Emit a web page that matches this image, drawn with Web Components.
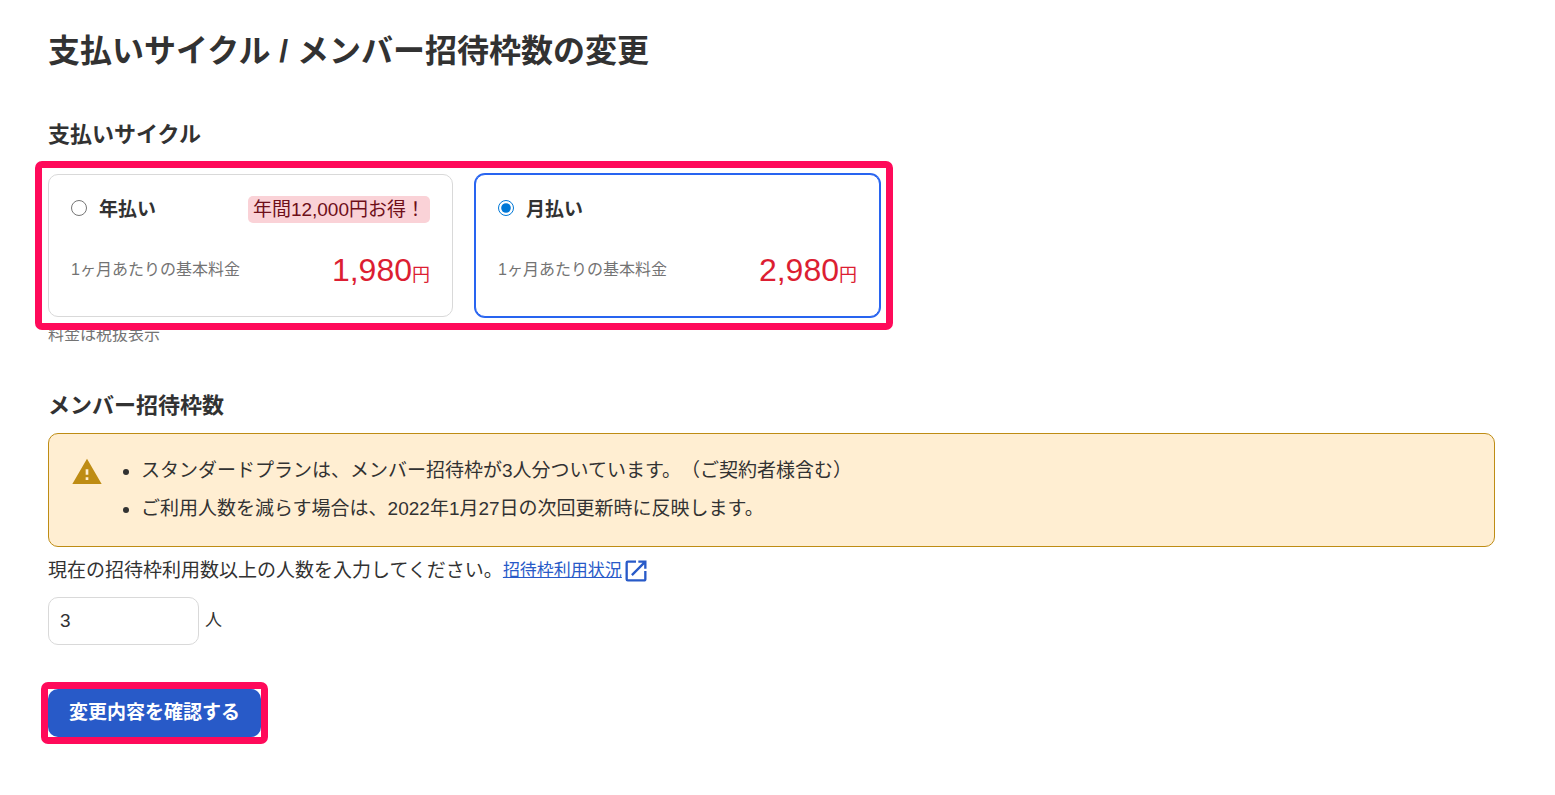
<!DOCTYPE html>
<html lang="ja">
<head>
<meta charset="utf-8">
<meta name="viewport" content="width=device-width, initial-scale=1">
<title>支払いサイクル / メンバー招待枠数の変更</title>
<style>
    body{
        margin: 0;
        background-color: #fff;
        color: #323232;
        font-family: "Liberation Sans", "Noto Sans CJK JP", sans-serif;
        font-size: 19px;
        line-height: 32px;
        text-spacing-trim: space-all;
        --danger: #dc1e32;
        --primary: #285ac8;
        --line: #d9d9d9;
        --muted: #737373;
    }
</style>
</head>
<body>
<plan-change></plan-change>

<template id="form-section">
    <style>
        :host{
            display: block;
        }
        h2{
            margin: 0 0 11px;
            font-size: 22px;
            line-height: 32px;
        }
    </style>
    <section>
        <h2></h2>
        <slot></slot>
    </section>
</template>

<template id="highlight-frame">
    <style>
        :host{
            display: block;
            position: relative;
            --space: 0px;
        }
        :host([wide]){
            --space: 6px;
        }
        .frame{
            position: absolute;
            inset: calc(-7px - var(--space));
            border: 7px solid #ff0a5a;
            border-radius: 7px;
            pointer-events: none;
        }
    </style>
    <slot></slot>
    <div class="frame"></div>
</template>

<template id="plan-card">
    <style>
        :host{
            display: block;
            padding: 21px 22px 22px;
            border: 1px solid var(--line);
            border-radius: 10px;
            background-color: #fff;
        }
        :host([selected]){
            border-color: #2864f0;
            box-shadow: 0 0 0 1px #2864f0;
        }
        .row{
            display: flex;
            align-items: center;
            justify-content: space-between;
        }
        .head{
            min-height: 27px;
            margin-bottom: 23px;
            line-height: 27px;
        }
        .choice{
            display: flex;
            align-items: center;
            gap: 12px;
            font-weight: bold;
        }
        .badge{
            padding: 0 5px;
            border-radius: 5px;
            background-color: #fad2d7;
            color: #6e0f19;
        }
        .caption{
            color: var(--muted);
            font-size: 16px;
            line-height: 24px;
        }
        .price{
            display: flex;
            align-items: baseline;
            color: var(--danger);
            font-size: 18px;
            line-height: 24px;
        }
        .amount{
            font-size: 32px;
            line-height: 48px;
        }
        [hidden]{
            display: none;
        }
    </style>
    <div class="row head">
        <span class="choice"><slot></slot></span>
        <span class="badge" hidden></span>
    </div>
    <div class="row">
        <span class="caption">1ヶ月あたりの基本料金</span>
        <span class="price"><span class="amount"></span>円</span>
    </div>
</template>

<template id="notice-box">
    <style>
        :host{
            display: flex;
            padding: 18px 22px;
            border: 1px solid #be8c14;
            border-radius: 10px;
            background-color: #ffeed2;
        }
        svg{
            flex: none;
            width: 32px;
            height: 32px;
            margin-top: 4px;
            fill: #be8c14;
        }
    </style>
    <svg viewBox="0 0 24 24" aria-hidden="true"><path d="M1 21h22L12 2 1 21zm12-3h-2v-2h2v2zm0-4h-2v-4h2v4z"/></svg>
    <slot></slot>
</template>

<template id="external-link">
    <style>
        :host{
            display: inline-flex;
        }
        a{
            display: inline-flex;
            align-items: center;
            color: var(--primary);
            font-size: 17px;
            text-decoration: none;
        }
        span{
            text-decoration: underline;
        }
        svg{
            width: 28px;
            height: 28px;
            fill: currentColor;
        }
    </style>
    <a target="_blank" rel="noopener">
        <span><slot></slot></span>
        <svg viewBox="0 0 24 24" aria-hidden="true"><path d="M19 19H5V5h7V3H5a2 2 0 0 0-2 2v14a2 2 0 0 0 2 2h14c1.1 0 2-.9 2-2v-7h-2v7zM14 3v2h3.59l-9.83 9.83 1.41 1.41L19 6.41V10h2V3h-7z"/></svg>
    </a>
</template>

<template id="primary-button">
    <style>
        :host{
            display: block;
        }
        button{
            display: block;
            padding: 8px 21px;
            border: 0;
            border-radius: 10px;
            background-color: var(--primary);
            color: #fff;
            font: inherit;
            font-weight: bold;
            cursor: pointer;
        }
        button:hover{
            background-color: #1e46aa;
        }
    </style>
    <button type="button"><slot></slot></button>
</template>

<template id="plan-change">
    <style>
        :host{
            display: block;
            padding: 27px 60px 51px 48px;
        }
        h1{
            margin: 0 0 44px;
            font-size: 32px;
            line-height: 48px;
        }
        .plans{
            max-width: 832px;
            margin-top: 23px;
        }
        .cards{
            display: grid;
            grid-template-columns: repeat(auto-fit, minmax(320px, 1fr));
            gap: 22px;
        }
        input[type=radio]{
            width: 16px;
            height: 16px;
            margin: 0 0 4px;
            accent-color: #0078d7;
        }
        .tax{
            margin: 6px 0 43px;
            color: var(--muted);
            font-size: 16px;
            line-height: 24px;
        }
        ul{
            margin: 0;
            padding-left: 38px;
            line-height: 38px;
        }
        .help{
            display: flex;
            flex-wrap: wrap;
            align-items: center;
            margin: 8px 0 10px;
        }
        .count{
            display: flex;
            align-items: center;
            gap: 6px;
            margin-bottom: 44px;
        }
        .count input{
            box-sizing: border-box;
            width: 151px;
            height: 48px;
            padding: 0 11px;
            border: 1px solid var(--line);
            border-radius: 10px;
            background-color: #fff;
            color: inherit;
            font: inherit;
        }
        .unit{
            font-size: 17px;
        }
        highlight-frame.submit{
            width: fit-content;
        }
    </style>
    <main>
        <h1>支払いサイクル / メンバー招待枠数の変更</h1>
        <form-section heading="支払いサイクル">
            <highlight-frame class="plans" wide>
                <div class="cards">
                    <plan-card price="1,980" badge="年間12,000円お得！">
                        <input type="radio" name="cycle" id="yearly" value="yearly">
                        <label for="yearly">年払い</label>
                    </plan-card>
                    <plan-card price="2,980">
                        <input type="radio" name="cycle" id="monthly" value="monthly" checked>
                        <label for="monthly">月払い</label>
                    </plan-card>
                </div>
            </highlight-frame>
            <p class="tax">料金は税抜表示</p>
        </form-section>
        <form-section heading="メンバー招待枠数">
            <notice-box>
                <ul>
                    <li>スタンダードプランは、メンバー招待枠が3人分ついています。（ご契約者様含む）</li>
                    <li>ご利用人数を減らす場合は、2022年1月27日の次回更新時に反映します。</li>
                </ul>
            </notice-box>
            <div class="help">
                <label for="members">現在の招待枠利用数以上の人数を入力してください。</label>
                <external-link href="#usage">招待枠利用状況</external-link>
            </div>
            <div class="count">
                <input type="text" inputmode="numeric" id="members" value="3">
                <span class="unit">人</span>
            </div>
        </form-section>
        <highlight-frame class="submit">
            <primary-button>変更内容を確認する</primary-button>
        </highlight-frame>
    </main>
</template>

<script>
    ((customElements, document)=>{
        'use strict';
        class BaseElement extends HTMLElement{
            constructor(){
                super();
                const template = document.querySelector('template#' + this.localName);
                this.attachShadow({mode: 'open'});
                this.shadowRoot.appendChild(document.importNode(template.content, true));
            }
        }

        class FormSection extends BaseElement{
            connectedCallback(){
                this.shadowRoot.querySelector('h2').textContent = this.getAttribute('heading');
            }
        }

        class PlanCard extends BaseElement{
            connectedCallback(){
                const badge = this.shadowRoot.querySelector('.badge');
                badge.textContent = this.getAttribute('badge');
                badge.hidden = !this.hasAttribute('badge');
                this.shadowRoot.querySelector('.amount').textContent = this.getAttribute('price');
                this.refresh();
            }

            refresh(){
                const radio = this.querySelector('input');
                this.toggleAttribute('selected', radio !== null && radio.checked);
            }
        }

        class ExternalLink extends BaseElement{
            connectedCallback(){
                this.shadowRoot.querySelector('a').href = this.getAttribute('href');
            }
        }

        class PlanChange extends BaseElement{
            connectedCallback(){
                // both radios live in this root, so one listener updates every card
                this.shadowRoot.addEventListener('change', ()=> {
                    for(const card of this.shadowRoot.querySelectorAll('plan-card')){
                        card.refresh();
                    }
                });
            }
        }

        customElements.define('form-section', FormSection);
        customElements.define('highlight-frame', class extends BaseElement{});
        customElements.define('plan-card', PlanCard);
        customElements.define('notice-box', class extends BaseElement{});
        customElements.define('external-link', ExternalLink);
        customElements.define('primary-button', class extends BaseElement{});
        customElements.define('plan-change', PlanChange);
    })(window.customElements, document);
</script>
</body>
</html>
